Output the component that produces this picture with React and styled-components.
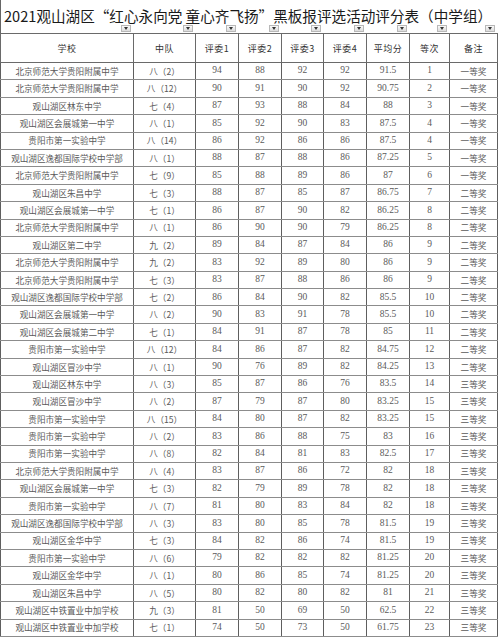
import React from 'react';
import styled, { createGlobalStyle } from 'styled-components';

const GlobalStyle = createGlobalStyle`
    html, body {
        margin: 0;
        padding: 0;
        background: #ffffff;
    }
    body {
        font-family: "Liberation Serif", "Noto Sans CJK SC", serif;
    }
`;

const cols = [133, 62, 43, 43, 42, 43, 43, 40, 48];
const template = cols.map(w => `${w}px`).join(' ');

const rows = [
    ['北京师范大学贵阳附属中学', '八（2）', 94, 88, 92, 92, '91.5', 1, '一等奖'],
    ['北京师范大学贵阳附属中学', '八（12）', 90, 91, 90, 92, '90.75', 2, '一等奖'],
    ['观山湖区林东中学', '七（4）', 87, 93, 88, 84, '88', 3, '一等奖'],
    ['观山湖区会展城第一中学', '八（1）', 85, 92, 90, 83, '87.5', 4, '一等奖'],
    ['贵阳市第一实验中学', '八（14）', 86, 92, 86, 86, '87.5', 4, '一等奖'],
    ['观山湖区逸都国际学校中学部', '八（1）', 88, 87, 88, 86, '87.25', 5, '一等奖'],
    ['北京师范大学贵阳附属中学', '七（9）', 85, 88, 89, 86, '87', 6, '一等奖'],
    ['观山湖区朱昌中学', '七（3）', 88, 87, 85, 87, '86.75', 7, '二等奖'],
    ['观山湖区会展城第一中学', '七（1）', 86, 87, 90, 82, '86.25', 8, '二等奖'],
    ['北京师范大学贵阳附属中学', '八（1）', 86, 90, 90, 79, '86.25', 8, '二等奖'],
    ['观山湖区第二中学', '九（2）', 89, 84, 87, 84, '86', 9, '二等奖'],
    ['北京师范大学贵阳附属中学', '九（2）', 83, 92, 89, 80, '86', 9, '二等奖'],
    ['北京师范大学贵阳附属中学', '七（3）', 83, 87, 88, 86, '86', 9, '二等奖'],
    ['观山湖区逸都国际学校中学部', '七（2）', 86, 84, 90, 82, '85.5', 10, '二等奖'],
    ['观山湖区会展城第一中学', '八（2）', 90, 83, 91, 78, '85.5', 10, '二等奖'],
    ['观山湖区会展城第二中学', '七（1）', 84, 91, 87, 78, '85', 11, '二等奖'],
    ['贵阳市第一实验中学', '八（12）', 84, 86, 87, 82, '84.75', 12, '二等奖'],
    ['观山湖区冒沙中学', '八（1）', 90, 76, 89, 82, '84.25', 13, '二等奖'],
    ['观山湖区林东中学', '八（3）', 85, 87, 86, 76, '83.5', 14, '三等奖'],
    ['观山湖区冒沙中学', '八（2）', 87, 79, 87, 80, '83.25', 15, '三等奖'],
    ['贵阳市第一实验中学', '八（15）', 84, 80, 87, 82, '83.25', 15, '三等奖'],
    ['贵阳市第一实验中学', '八（2）', 83, 86, 88, 75, '83', 16, '三等奖'],
    ['贵阳市第一实验中学', '八（8）', 82, 84, 81, 83, '82.5', 17, '三等奖'],
    ['北京师范大学贵阳附属中学', '八（4）', 83, 87, 86, 72, '82', 18, '三等奖'],
    ['观山湖区会展城第一中学', '七（3）', 82, 79, 89, 78, '82', 18, '三等奖'],
    ['贵阳市第一实验中学', '八（7）', 81, 80, 83, 84, '82', 18, '三等奖'],
    ['观山湖区逸都国际学校中学部', '八（3）', 83, 80, 85, 78, '81.5', 19, '三等奖'],
    ['观山湖区金华中学', '七（3）', 84, 82, 86, 74, '81.5', 19, '三等奖'],
    ['贵阳市第一实验中学', '八（6）', 79, 82, 82, 82, '81.25', 20, '三等奖'],
    ['观山湖区金华中学', '八（1）', 80, 86, 85, 74, '81.25', 20, '三等奖'],
    ['观山湖区朱昌中学', '八（5）', 80, 82, 80, 82, '81', 21, '三等奖'],
    ['观山湖区中铁置业中加学校', '九（3）', 81, 50, 69, 50, '62.5', 22, '三等奖'],
    ['观山湖区中铁置业中加学校', '七（1）', 74, 50, 73, 50, '61.75', 23, '三等奖'],
];

const headers = ['学校', '中队', '评委1', '评委2', '评委3', '评委4', '平均分', '等次', '备注'];

const Sheet = styled.div`
    width: 500px;
    height: 639px;
    overflow: hidden;
    background: #fff;
`;

const TitleBar = styled.div`
    position: relative;
    height: 33px;
    display: flex;
    align-items: center;
    padding: 0 0 3px 3px;
    box-sizing: border-box;
    border-left: 1px solid #666;
`;

const Title = styled.h1`
    margin: 0;
    font-family: "Noto Sans CJK SC", sans-serif;
    font-size: 14.6px;
    font-weight: 400;
    color: #1a1a1a;
    white-space: nowrap;
`;

const FilterRow = styled.div`
    position: absolute;
    left: 0;
    bottom: 1px;
    display: grid;
    grid-template-columns: ${template};
`;

const FilterCell = styled.div`
    display: flex;
    justify-content: flex-end;
    padding-right: 3px;
`;

const FilterButton = styled.span`
    width: 10px;
    height: 7px;
    box-sizing: border-box;
    border: 1px solid #b8b8b8;
    background: linear-gradient(#fafafa, #dcdcdc);
    display: flex;
    align-items: center;
    justify-content: center;
    &::after {
        content: '';
        border-left: 2.5px solid transparent;
        border-right: 2.5px solid transparent;
        border-top: 3px solid #333;
    }
`;

const Table = styled.table`
    border-collapse: collapse;
    table-layout: fixed;
    width: 497px;
`;

const Th = styled.th`
    height: 28px;
    padding: 0;
    font-family: "Noto Sans CJK SC", sans-serif;
    font-size: 9px;
    font-weight: 400;
    color: #333;
    text-align: center;
    border: 1px solid #6a6a6a;
    letter-spacing: 0.5px;
`;

const Td = styled.td`
    height: 16.4px;
    padding: 0;
    font-family: ${p => (p.$cjk ? '"Noto Sans CJK SC", sans-serif' : '"Liberation Serif", "Noto Sans CJK SC", serif')};
    font-size: ${p => (p.$cjk ? '8.6px' : '9.5px')};
    font-weight: 400;
    color: #5a5a5a;
    text-align: center;
    white-space: nowrap;
    border-top: 1px solid #8c8c8c;
    border-bottom: 1px solid #8c8c8c;
    border-left: 1px solid #5e5e5e;
    border-right: 1px solid #5e5e5e;
    line-height: 1;
`;

export default function App() {
    return (
        <Sheet>
            <GlobalStyle />
            <TitleBar>
                <Title>2021观山湖区“红心永向党 童心齐飞扬”黑板报评选活动评分表（中学组）</Title>
                <FilterRow>
                    {cols.map((w, i) => (
                        <FilterCell key={i}>
                            <FilterButton />
                        </FilterCell>
                    ))}
                </FilterRow>
            </TitleBar>
            <Table>
                <colgroup>
                    {cols.map((w, i) => (
                        <col key={i} style={{ width: w }} />
                    ))}
                </colgroup>
                <thead>
                    <tr>
                        {headers.map(h => (
                            <Th key={h}>{h}</Th>
                        ))}
                    </tr>
                </thead>
                <tbody>
                    {rows.map((r, i) => (
                        <tr key={i}>
                            {r.map((v, j) => (
                                <Td key={j} $cjk={j === 0 || j === 1 || j === 8}>{v}</Td>
                            ))}
                        </tr>
                    ))}
                </tbody>
            </Table>
        </Sheet>
    );
}
